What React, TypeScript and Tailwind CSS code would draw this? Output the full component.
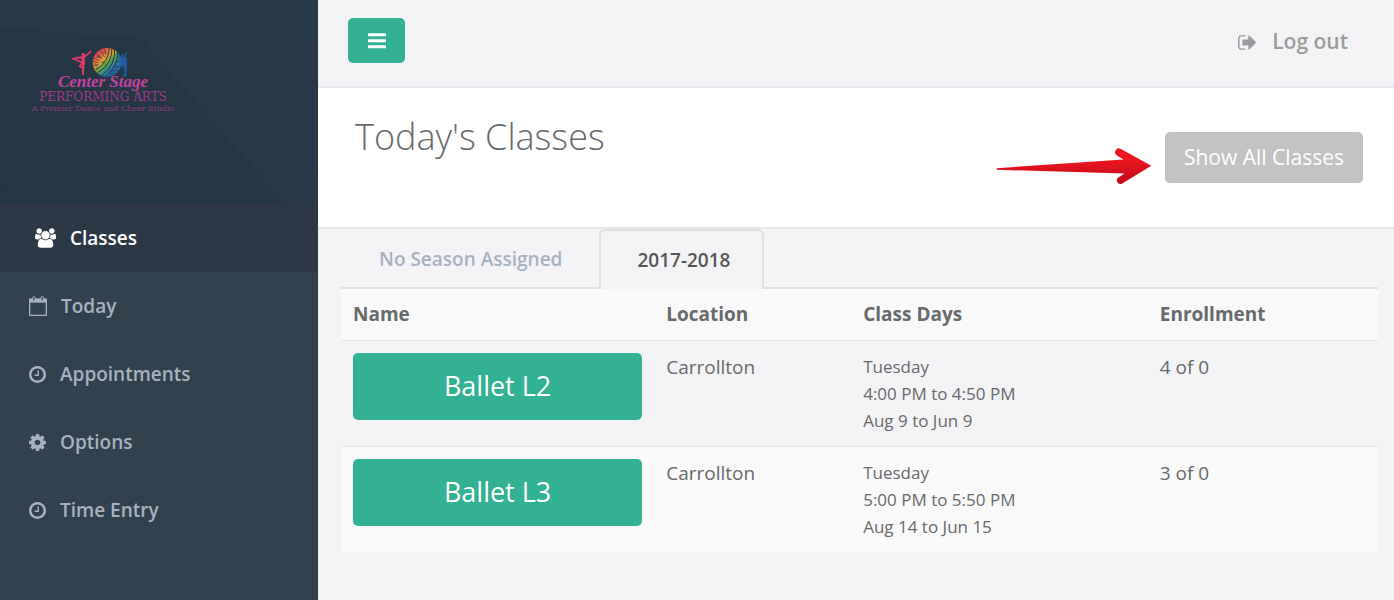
import React, { FC, useState } from "react";

type T_IconProps = { className?: string };

const UsersIcon: FC<T_IconProps> = ({ className }) => (
  <svg viewBox="-64 0 1920 1792" fill="currentColor" className={className} aria-hidden="true">
    <path d="M529 896q-162 5-265 128h-134q-82 0-138-40.5t-56-118.5q0-353 124-353 6 0 43.5 21t97.5 42.5 119 21.5q67 0 133-23-5 37-5 66 0 139 81 256zm1071 637q0 120-73 189.5t-194 69.5h-874q-121 0-194-69.5t-73-189.5q0-53 3.5-103.5t14-109 26.5-108.5 43-97.5 62-81 85.5-53.5 111.5-20q10 0 43 21.5t73 48 107 48 135 21.5 135-21.5 107-48 73-48 43-21.5q61 0 111.5 20t85.5 53.5 62 81 43 97.5 26.5 108.5 14 109 3.5 103.5zm-1024-1277q0 106-75 181t-181 75-181-75-75-181 75-181 181-75 181 75 75 181zm704 384q0 159-112.5 271.5t-271.5 112.5-271.5-112.5-112.5-271.5 112.5-271.5 271.5-112.5 271.5 112.5 112.5 271.5zm576 225q0 78-56 118.5t-138 40.5h-134q-103-123-265-128 81-117 81-256 0-29-5-66 66 23 133 23 59 0 119-21.5t97.5-42.5 43.5-21q124 0 124 353zm-128-609q0 106-75 181t-181 75-181-75-75-181 75-181 181-75 181 75 75 181z" />
  </svg>
);

const CalendarIcon: FC<T_IconProps> = ({ className }) => (
  <svg viewBox="0 0 54 60" fill="none" stroke="currentColor" className={className} aria-hidden="true">
    <path d="M2 11h50v45q0 2-2 2H4q-2 0-2-2z" strokeWidth="4" />
    <path d="M1 7h52v13H1z" fill="currentColor" stroke="none" />
    <rect x="11" y="2" width="7" height="13" rx="3" fill="#31424e" strokeWidth="3" />
    <rect x="36" y="2" width="7" height="13" rx="3" fill="#31424e" strokeWidth="3" />
  </svg>
);

const ClockIcon: FC<T_IconProps> = ({ className }) => (
  <svg viewBox="128 128 1536 1536" fill="currentColor" className={className} aria-hidden="true">
    <path d="M1024 544v448q0 14-9 23t-23 9h-320q-14 0-23-9t-9-23v-64q0-14 9-23t23-9h224v-352q0-14 9-23t23-9h64q14 0 23 9t9 23zm416 352q0-148-73-273t-198-198-273-73-273 73-198 198-73 273 73 273 198 198 273 73 273-73 198-198 73-273zm224 0q0 209-103 385.5t-279.5 279.5-385.5 103-385.5-103-279.5-279.5-103-385.5 103-385.5 279.5-279.5 385.5-103 385.5 103 279.5 279.5 103 385.5z" />
  </svg>
);

const CogIcon: FC<T_IconProps> = ({ className }) => (
  <svg viewBox="128 128 1536 1536" fill="currentColor" className={className} aria-hidden="true">
    <path d="M1152 896q0-106-75-181t-181-75-181 75-75 181 75 181 181 75 181-75 75-181zm512-109v222q0 12-8 23t-20 13l-185 28q-19 54-39 91 35 50 107 138 10 12 10 25t-9 23q-27 37-99 108t-94 71q-12 0-26-9l-138-108q-44 23-91 38-16 136-29 186-7 28-36 28h-222q-14 0-24.5-8.5t-11.5-21.5l-28-184q-49-16-90-37l-141 107q-10 9-25 9-14 0-25-11-126-114-165-168-7-10-7-23 0-12 8-23 15-21 51-66.5t54-70.5q-27-50-41-99l-183-27q-13-2-21-12.5t-8-23.5v-222q0-12 8-23t19-13l186-28q14-46 39-92-40-57-107-138-10-12-10-24 0-10 9-23 26-36 98.5-107.5t94.5-71.5q13 0 26 10l138 107q44-23 91-38 16-136 29-186 7-28 36-28h222q14 0 24.5 8.5t11.5 21.5l28 184q49 16 90 37l142-107q9-9 24-9 13 0 25 10 129 119 165 170 7 8 7 22 0 12-8 23-15 21-51 66.5t-54 70.5q26 50 41 98l183 28q13 2 21 12.5t8 23.5z" />
  </svg>
);

const SignOutIcon: FC<T_IconProps> = ({ className }) => (
  <svg viewBox="64 256 1568 1280" fill="currentColor" className={className} aria-hidden="true">
    <path d="M704 1440q0 4 1 20t.5 26.5-3 23.5-10 19.5-20.5 6.5h-320q-119 0-203.5-84.5t-84.5-203.5v-704q0-119 84.5-203.5t203.5-84.5h320q13 0 22.5 9.5t9.5 22.5q0 4 1 20t.5 26.5-3 23.5-10 19.5-20.5 6.5h-320q-66 0-113 47t-47 113v704q0 66 47 113t113 47h312l11.5 1 11.5 3 8 5.5 7 9 2 13.5zm928-544q0 26-19 45l-544 544q-19 19-45 19t-45-19-19-45v-288h-448q-26 0-45-19t-19-45v-384q0-26 19-45t45-19h448v-288q0-26 19-45t45-19 45 19l544 544q19 19 19 45z" />
  </svg>
);

const BarsIcon: FC<T_IconProps> = ({ className }) => (
  <svg viewBox="0 0 54 48" fill="currentColor" className={className} aria-hidden="true">
    <rect x="0" y="1" width="54" height="9" rx="2" />
    <rect x="0" y="19" width="54" height="9" rx="2" />
    <rect x="0" y="37" width="54" height="9" rx="2" />
  </svg>
);

const ArrowPointer: FC<T_IconProps> = ({ className }) => (
  <svg viewBox="46 445 474 112" className={className} aria-hidden="true">
    <defs>
      <linearGradient id="arrowFill" x1="0" y1="0" x2="0" y2="1">
        <stop offset="0.3" stopColor="#ee1620" />
        <stop offset="0.8" stopColor="#c90d18" />
      </linearGradient>
    </defs>
    <path
      d="M50 506L433 480L413 468A11 11 0 0 1 425 448L517 499L428 553A11 11 0 0 1 415 536L436 522L50 511Q46 508 50 506Z"
      fill="url(#arrowFill)"
    />
  </svg>
);

const LogoMark: FC<T_IconProps> = ({ className }) => (
  <svg viewBox="155 35 171 93" className={className} aria-hidden="true">
    <defs>
      <linearGradient id="globe" x1="0.1" y1="0" x2="0.9" y2="0.9">
        <stop offset="0" stopColor="#e8325f" />
        <stop offset="0.2" stopColor="#e4504a" />
        <stop offset="0.42" stopColor="#e3a336" />
        <stop offset="0.56" stopColor="#57a545" />
        <stop offset="0.75" stopColor="#2b78a8" />
        <stop offset="1" stopColor="#1f5ba8" />
      </linearGradient>
      <clipPath id="globeClip">
        <circle cx="263" cy="81" r="43" />
      </clipPath>
    </defs>
    <g fill="none" stroke="#e23a6a" strokeLinecap="round" strokeLinejoin="round">
      <circle cx="192" cy="57" r="5" fill="#e23a6a" stroke="none" />
      <path d="M191 65L192 84" strokeWidth="10" />
      <path d="M159 71L176 66L191 67L204 58L214 49" strokeWidth="5" />
      <path d="M190 82L166 72M190 82L181 92L190 98" strokeWidth="5" />
      <path d="M192 84L191 117" strokeWidth="6" />
    </g>
    <circle cx="263" cy="81" r="43" fill="url(#globe)" />
    <g clipPath="url(#globeClip)" fill="none" stroke="#263746" strokeWidth="2">
      <path d="M278 36Q280 85 236 112M286 38Q290 92 245 122M270 36Q270 78 230 104M294 44Q300 95 256 126" strokeWidth="3" />
      <path d="M218 66L240 76M220 78L238 82M222 90L236 90M230 54L248 70M242 44L256 66M254 40L262 58M226 100L238 96" />
      <path d="M232 66q8-8 14 2M244 84q8-10 12 0M226 84q6 10 12 2M250 52q8-4 10 4M240 58q-8 6 0 10" />
      <path d="M290 80q8-6 12 2M280 94q8-8 14 2M270 108q8-8 14 0M290 96l12-4M284 106l10-2M294 68l10 6M272 116l14-2" />
    </g>
    <g fill="none" stroke="#1f5ca9" strokeLinecap="round" strokeLinejoin="round">
      <path d="M292 57L302 66L314 70L321 51" strokeWidth="4" />
      <circle cx="309" cy="61" r="4" fill="#1f5ca9" stroke="none" />
      <path d="M310 68L321 68L321 122L310 122L318 112L314 92L304 90Z" fill="#1f5ca9" strokeWidth="2" />
    </g>
  </svg>
);

const Brand: FC = () => (
  <div className="relative h-[204px] overflow-hidden bg-[#253645] px-8 pt-[47px]">
    <svg
      viewBox="0 0 318 204"
      preserveAspectRatio="none"
      className="absolute inset-0 h-full w-full"
      aria-hidden="true"
    >
      <path d="M0 0H164L141 39L0 27Z" fill="#283a4a" />
      <path d="M164 0H318V204H285L141 39Z" fill="#293949" />
      <path d="M164 0H318V40L250 66L141 39Z" fill="#293a4a" />
      <path d="M285 195L318 165V204H290Z" fill="#2a3a48" />
      <path d="M0 100L34 190L0 184Z" fill="#263746" />
    </svg>
    <div className="relative flex w-[142px] flex-col items-center whitespace-nowrap">
      <LogoMark className="mr-2 h-[31px] w-[57px]" />
      <div className="-mt-1 font-['Liberation_Serif',serif] text-[17px] leading-[16px] font-bold text-[#c541a0] italic">
        Center Stage
      </div>
      <div className="font-['DejaVu_Serif',serif] text-[12px] leading-[14px] text-[#a13c8e]">
        PERFORMING ARTS
      </div>
      <div className="font-['DejaVu_Serif',serif] text-[8px] leading-[10px] text-[#8d3c82]">
        A Premier Dance and Cheer Studio
      </div>
    </div>
  </div>
);

const menu = [
  { label: "Today", icon: <CalendarIcon className="h-5 w-[18px]" /> },
  { label: "Appointments", icon: <ClockIcon className="h-[17px] w-[17px]" /> },
  { label: "Options", icon: <CogIcon className="h-[17px] w-[17px]" /> },
  { label: "Time Entry", icon: <ClockIcon className="h-[17px] w-[17px]" /> },
];

const Sidebar: FC = () => (
  <aside className="w-[318px] shrink-0 bg-[#31424e]">
    <Brand />
    <nav className="text-[19px] font-semibold">
      <a href="#classes" className="flex h-[68px] items-center gap-[14px] bg-[#2c3846] pl-[35px] text-white">
        <UsersIcon className="h-5 w-[21px]" />
        Classes
      </a>
      {menu.map((item) => (
        <a
          key={item.label}
          href={"#" + item.label.toLowerCase().replace(" ", "-")}
          className="flex h-[68px] items-center gap-[14px] pl-[29px] text-[#a7b1c2] hover:text-white"
        >
          {item.icon}
          {item.label}
        </a>
      ))}
    </nav>
  </aside>
);

const classes = [
  {
    name: "Ballet L2",
    location: "Carrollton",
    days: ["Tuesday", "4:00 PM to 4:50 PM", "Aug 9 to Jun 9"],
    enrollment: "4 of 0",
  },
  {
    name: "Ballet L3",
    location: "Carrollton",
    days: ["Tuesday", "5:00 PM to 5:50 PM", "Aug 14 to Jun 15"],
    enrollment: "3 of 0",
  },
];

const seasons = ["No Season Assigned", "2017-2018"];

const App: FC = () => {
  const [season, setSeason] = useState("2017-2018");

  return (
    <div className="flex min-h-screen bg-[#f3f3f5] font-['Open_Sans',sans-serif] text-[#676a6c]">
      <Sidebar />
      <div className="min-w-0 flex-1">
        <header className="flex h-[88px] items-start justify-between border-b-2 border-[#e7eaec] pt-[18px] pr-[46px] pl-[30px]">
          <button
            type="button"
            aria-label="Toggle menu"
            className="flex h-[45px] w-[57px] items-center justify-center rounded-[5px] bg-[#32b194] text-white"
          >
            <BarsIcon className="h-4 w-[18px]" />
          </button>
          <a href="#logout" className="flex h-12 items-center gap-4 text-[21px] font-semibold text-[#999c9e]">
            <SignOutIcon className="h-[15px] w-[18px]" />
            Log out
          </a>
        </header>

        <div className="flex h-[141px] items-start justify-between border-b-2 border-[#e7eaec] bg-white pr-[31px] pl-[37px]">
          <h1 className="mt-6 text-[36px] leading-[50px] font-light">Today's Classes</h1>
          <div className="mt-11 flex items-start gap-3">
            <ArrowPointer className="mt-4 h-[37px] w-[158px]" />
            <button type="button" className="h-[51px] rounded-[5px] bg-[#c2c2c2] px-[19px] text-[21px] text-white">
              Show All Classes
            </button>
          </div>
        </div>

        <main className="pr-4 pb-12 pl-[23px]">
          <div className="flex gap-[3px] border-b-2 border-[#dfe0e2]" role="tablist">
            {seasons.map((item) => (
              <button
                key={item}
                type="button"
                role="tab"
                aria-selected={season === item}
                onClick={() => setSeason(item)}
                className={
                  season === item
                    ? "-mb-[2px] h-[60px] rounded-t-[6px] border-2 border-b-0 border-[#dfe0e2] bg-[#f3f3f5] pr-8 pl-9 text-[19px] font-semibold text-[#555555]"
                    : "h-[58px] border-2 border-b-0 border-transparent pr-8 pl-9 text-[19px] font-semibold text-[#a7b1c2]"
                }
              >
                {item}
              </button>
            ))}
          </div>

          <table className="w-full table-fixed border-collapse text-left text-[19px]">
            <thead>
              <tr className="h-[51px] border-b border-[#e2e5e8] bg-[#f9f9f9] font-bold">
                <th className="w-[30.2%] px-3">Name</th>
                <th className="w-[19%] px-3">Location</th>
                <th className="w-[28.6%] px-3">Class Days</th>
                <th className="px-3">Enrollment</th>
              </tr>
            </thead>
            <tbody>
              {classes.map((item) => (
                <tr
                  key={item.name}
                  className="border-b border-[#e2e5e8] align-top last:border-b-0 even:bg-[#f9f9f9]"
                >
                  <td className="p-3">
                    <button
                      type="button"
                      className="h-[67px] w-full rounded-[5px] bg-[#32b194] text-[27px] text-white"
                    >
                      {item.name}
                    </button>
                  </td>
                  <td className="p-3 leading-[28px]">{item.location}</td>
                  <td className="p-3 text-[17px] leading-[27px]">
                    {item.days.map((line) => (
                      <div key={line}>{line}</div>
                    ))}
                  </td>
                  <td className="p-3 leading-[28px]">{item.enrollment}</td>
                </tr>
              ))}
            </tbody>
          </table>
        </main>
      </div>
    </div>
  );
};

export default App;
